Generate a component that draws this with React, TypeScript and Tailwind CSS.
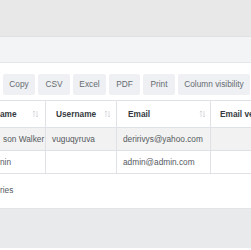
import React from "react";

const font = { fontFamily: '"Liberation Sans", Arial, sans-serif' };

function Sort() {
  return (
    <svg width="7" height="8" viewBox="0 0 7 8" className="shrink-0">
      <path d="M2 7V1M0.8 2.2L2 1L3.2 2.2" stroke="#cfd3d7" strokeWidth="0.8" fill="none" />
      <path d="M5 1V7M3.8 5.8L5 7L6.2 5.8" stroke="#cfd3d7" strokeWidth="0.8" fill="none" />
    </svg>
  );
}

export default function App() {
  const btns: [string, string][] = [
    ["Copy", "w-[32px]"],
    ["CSV", "w-[32px]"],
    ["Excel", "w-[33px]"],
    ["PDF", "w-[31px]"],
    ["Print", "w-[32px]"],
    ["Column visibility", "w-[72px]"],
  ];
  return (
    <div className="w-[251px] h-[250px] overflow-hidden bg-white text-[8.3px]" style={font}>
      <div className="h-[37px] bg-[#e8e8e9] border-b border-[#dfe1e4]" />
      <div className="h-[26px] bg-[#f3f4f6] border-b border-[#e3e6ea]" />
      <div className="pt-[11px] pl-[3px] flex gap-[3px] text-[#666b70]">
        {btns.map(([b, w]) => (
          <div key={b} className={`${w} shrink-0 h-[21px] bg-[#eef0f3] rounded-[2px] flex items-center justify-center whitespace-nowrap`}>
            {b}
          </div>
        ))}
      </div>
      <div className="mt-[5px] border-t border-[#dee2e6]">
        <div className="flex h-[27px] border-b border-[#dee2e6] font-bold text-[#343a40]">
          <div className="w-[46px] shrink-0 flex items-center justify-between pr-[6px] border-r border-[#dee2e6]">
            <span>ame</span>
            <Sort />
          </div>
          <div className="w-[71px] shrink-0 flex items-center justify-between pl-[10px] pr-[5px] border-r border-[#dee2e6]">
            <span>Username</span>
            <Sort />
          </div>
          <div className="w-[94px] shrink-0 flex items-center justify-between pl-[11px] pr-[4px] border-r border-[#dee2e6]">
            <span>Email</span>
            <Sort />
          </div>
          <div className="flex-1 flex items-center pl-[9px] whitespace-nowrap overflow-hidden">
            <span>Email verified</span>
          </div>
        </div>
        <div className="flex h-[23px] bg-[#f2f2f2] border-b border-[#dee2e6] text-[#555a5f]">
          <div className="w-[46px] shrink-0 flex items-center pl-[3px] border-r border-[#dee2e6] whitespace-nowrap overflow-hidden">
            son Walker
          </div>
          <div className="w-[71px] shrink-0 flex items-center pl-[6px] border-r border-[#dee2e6]">
            vuguqyruva
          </div>
          <div className="w-[94px] shrink-0 flex items-center pl-[6px] border-r border-[#dee2e6]">
            deririvys@yahoo.com
          </div>
          <div className="flex-1" />
        </div>
        <div className="flex h-[23px] border-b border-[#dee2e6] text-[#555a5f]">
          <div className="w-[46px] shrink-0 flex items-center border-r border-[#dee2e6] whitespace-nowrap">
            nin
          </div>
          <div className="w-[71px] shrink-0 border-r border-[#dee2e6]" />
          <div className="w-[94px] shrink-0 flex items-center pl-[6px] border-r border-[#dee2e6]">
            admin@admin.com
          </div>
          <div className="flex-1" />
        </div>
      </div>
      <div className="h-[34px] flex items-center text-[#555a5f] pb-[1px]">ries</div>
      <div className="h-[40px] bg-[#e9eaec] border-t border-[#e2e4e7]" />
    </div>
  );
}
